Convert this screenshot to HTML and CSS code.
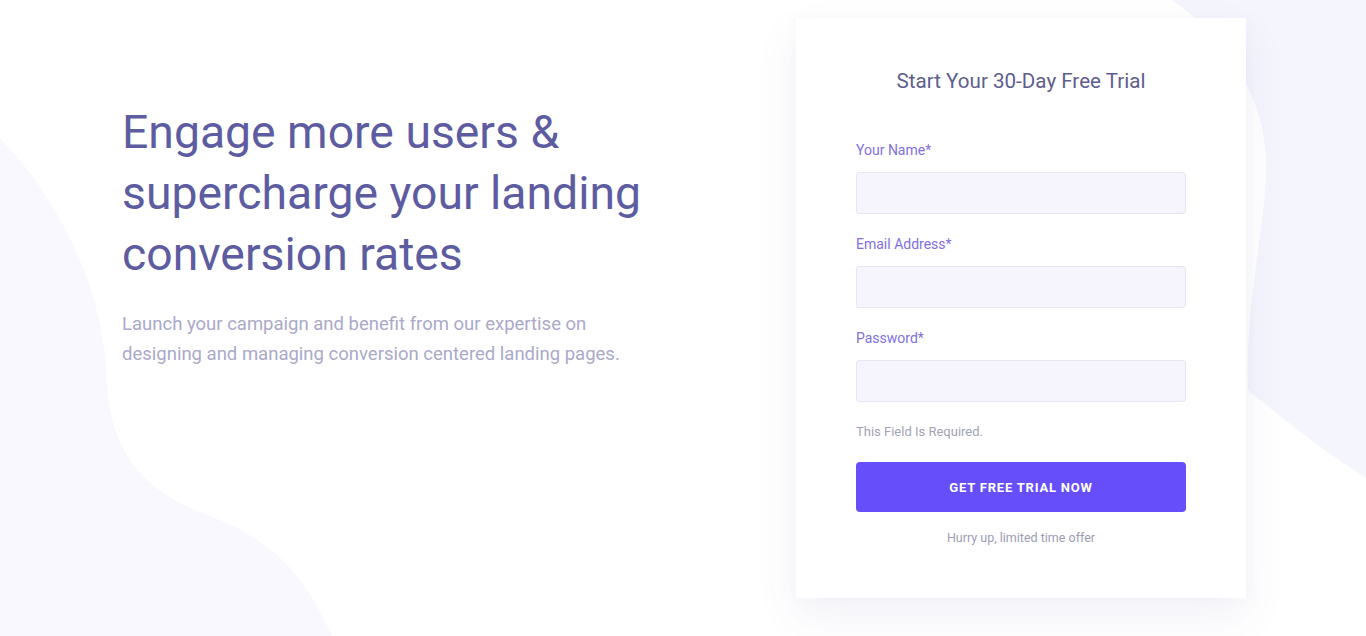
FILE: index.html
```html
<!DOCTYPE html>
<html lang="en">
<head>
<meta charset="utf-8">
<title>Free Trial</title>
<link rel="stylesheet" href="styles.css">
</head>
<body>
<div class="page">
  <svg class="bg" width="1366" height="636" viewBox="0 0 1366 636" aria-hidden="true">
    <path class="blob-left" d="M0,138 C60,200 104,290 107,380 C110,445 135,490 215,518 C285,545 312,592 332,636 L0,636 Z"/>
    <path class="blob-right" d="M1172,0 C1228,40 1268,100 1266,170 C1264,240 1245,300 1248,390 C1290,425 1330,455 1366,478 L1366,0 Z"/>
  </svg>
  <main class="hero">
    <section class="intro">
      <h1 class="headline">Engage more users &amp; supercharge your landing conversion rates</h1>
      <p class="lead">Launch your campaign and benefit from our expertise on designing and managing conversion centered landing pages.</p>
    </section>
    <form class="card">
      <h2 class="card-title">Start Your 30-Day Free Trial</h2>
      <label class="field">
        <span class="label">Your Name*</span>
        <input class="input" type="text">
      </label>
      <label class="field">
        <span class="label">Email Address*</span>
        <input class="input" type="email">
      </label>
      <label class="field">
        <span class="label">Password*</span>
        <input class="input" type="password">
      </label>
      <p class="hint">This Field Is Required.</p>
      <button class="btn" type="button">GET FREE TRIAL NOW</button>
      <p class="note">Hurry up, limited time offer</p>
    </form>
  </main>
</div>
</body>
</html>
```
FILE: styles.css
```css
* { box-sizing: border-box; }
html, body { margin: 0; padding: 0; }
body {
  background: #ffffff;
  font-family: Roboto, "Liberation Sans", Arial, sans-serif;
  overflow: hidden;
}
.page {
  position: relative;
  width: 1366px;
  height: 636px;
  overflow: hidden;
}
.bg {
  position: absolute;
  left: 0;
  top: 0;
  z-index: 0;
}
.blob-left { fill: #f8f8fe; }
.blob-right { fill: #f5f5fd; }
.hero {
  position: relative;
  z-index: 1;
  display: flex;
  justify-content: space-between;
  padding: 18px 120px 0 122px;
}
.intro {
  padding-top: 84px;
  width: 580px;
}
.headline {
  margin: 0;
  font-size: 46.3px;
  line-height: 61px;
  font-weight: 400;
  color: #5d5ca0;
  letter-spacing: 0;
}
.lead {
  margin: 24px 0 0;
  max-width: 520px;
  font-size: 18.5px;
  line-height: 30px;
  color: #aaa9ca;
}
.card {
  width: 450px;
  background: #ffffff;
  padding: 51px 60px 51px;
  display: flex;
  flex-direction: column;
  box-shadow: 0 18px 40px rgba(90, 90, 160, 0.08), 0 0 12px rgba(90, 90, 160, 0.03);
}
.card-title {
  margin: 0 0 47px;
  text-align: center;
  font-size: 20.6px;
  line-height: 24px;
  font-weight: 400;
  color: #5e5d8e;
}
.field {
  display: flex;
  flex-direction: column;
  gap: 12px;
  margin-bottom: 20px;
}
.label {
  font-size: 14px;
  line-height: 20px;
  color: #8070e2;
}
.input {
  height: 42px;
  width: 100%;
  background: #f6f5fd;
  border: 1px solid #e7e6f2;
  border-radius: 3px;
  font: inherit;
  padding: 0 12px;
}
.hint {
  margin: 1px 0 21px;
  font-size: 13px;
  line-height: 18px;
  color: #a3a3b6;
}
.btn {
  height: 50px;
  width: 100%;
  border: 0;
  border-radius: 4px;
  background: #664ffa;
  color: #ffffff;
  font-family: Roboto, "Liberation Sans", Arial, sans-serif;
  font-size: 13px;
  font-weight: 700;
  letter-spacing: 0.8px;
}
.note {
  margin: 17px 0 0;
  text-align: center;
  font-size: 12.5px;
  line-height: 18px;
  color: #9c9cb3;
}
```
